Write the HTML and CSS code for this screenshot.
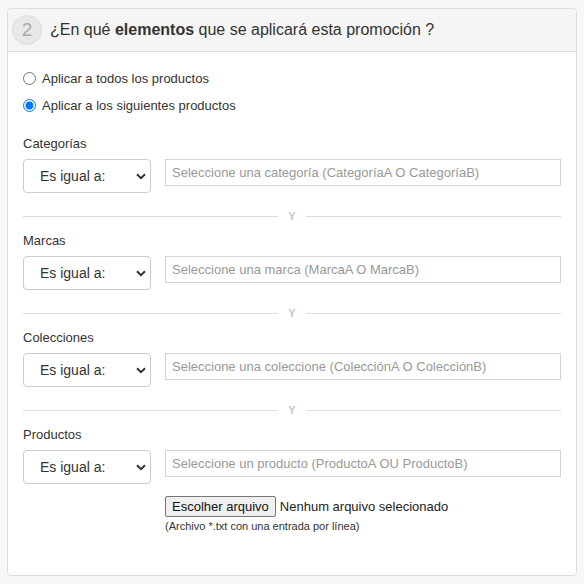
FILE: index.html
```html
<!DOCTYPE html>
<html lang="es">
<head>
<meta charset="utf-8">
<title>Promoción</title>
<link rel="stylesheet" href="styles.css">
</head>
<body>
<div class="card">
  <div class="card-header">
    <span class="step">2</span>
    <h2 class="title">¿En qué <b>elementos</b> que se aplicará esta promoción ?</h2>
  </div>
  <div class="card-body">
    <label class="radio-row"><input type="radio" name="scope" class="radio"><span>Aplicar a todos los productos</span></label>
    <label class="radio-row"><input type="radio" name="scope" class="radio" checked><span>Aplicar a los siguientes productos</span></label>

    <div class="field first">
      <div class="field-label">Categorías</div>
      <div class="row">
        <div class="select"><span>Es igual a:</span><svg class="chev" width="10" height="7" viewBox="0 0 10 7"><path d="M1 1.2 L5 5.2 L9 1.2" fill="none" stroke="#333" stroke-width="2"/></svg></div>
        <div class="col"><input class="text-input" type="text" placeholder="Seleccione una categoría (CategoríaA O CategoríaB)"></div>
      </div>
    </div>
    <div class="sep"><span class="line"></span><span class="y">Y</span><span class="line"></span></div>

    <div class="field">
      <div class="field-label">Marcas</div>
      <div class="row">
        <div class="select"><span>Es igual a:</span><svg class="chev" width="10" height="7" viewBox="0 0 10 7"><path d="M1 1.2 L5 5.2 L9 1.2" fill="none" stroke="#333" stroke-width="2"/></svg></div>
        <div class="col"><input class="text-input" type="text" placeholder="Seleccione una marca (MarcaA O MarcaB)"></div>
      </div>
    </div>
    <div class="sep"><span class="line"></span><span class="y">Y</span><span class="line"></span></div>

    <div class="field">
      <div class="field-label">Colecciones</div>
      <div class="row">
        <div class="select"><span>Es igual a:</span><svg class="chev" width="10" height="7" viewBox="0 0 10 7"><path d="M1 1.2 L5 5.2 L9 1.2" fill="none" stroke="#333" stroke-width="2"/></svg></div>
        <div class="col"><input class="text-input" type="text" placeholder="Seleccione una coleccione (ColecciónA O ColecciónB)"></div>
      </div>
    </div>
    <div class="sep"><span class="line"></span><span class="y">Y</span><span class="line"></span></div>

    <div class="field">
      <div class="field-label">Productos</div>
      <div class="row">
        <div class="select"><span>Es igual a:</span><svg class="chev" width="10" height="7" viewBox="0 0 10 7"><path d="M1 1.2 L5 5.2 L9 1.2" fill="none" stroke="#333" stroke-width="2"/></svg></div>
        <div class="col">
          <input class="text-input" type="text" placeholder="Seleccione un producto (ProductoA OU ProductoB)">
          <div class="file-row"><span class="file-btn">Escolher arquivo</span><span class="file-name">Nenhum arquivo selecionado</span></div>
          <div class="help">(Archivo *.txt con una entrada por línea)</div>
        </div>
      </div>
    </div>
  </div>
</div>
</body>
</html>
```
FILE: styles.css
```css
* { box-sizing: border-box; }
html, body { margin: 0; padding: 0; }
body {
  background: #f7f7f7;
  font-family: "Liberation Sans", Arial, sans-serif;
  color: #333;
  padding: 8px 7px 0 7px;
}
.card {
  width: 570px;
  height: 568px;
  background: #fff;
  border: 1px solid #ddd;
  border-radius: 4px;
  overflow: hidden;
}
.card-header {
  height: 43px;
  background: #f5f5f5;
  border-bottom: 1px solid #ddd;
  display: flex;
  align-items: center;
  padding-left: 4px;
  gap: 8px;
}
.step {
  width: 30px;
  height: 30px;
  border-radius: 50%;
  background: #e8e8e8;
  border: 1px solid #dcdcdc;
  color: #a8a8a8;
  font-size: 19px;
  display: flex;
  align-items: center;
  justify-content: center;
}
.title {
  margin: 0;
  font-size: 16px;
  font-weight: normal;
  color: #333;
}
.title b { font-weight: bold; }
.card-body {
  padding: 16px 15px 0 15px;
  font-size: 13px;
}
.radio-row {
  display: flex;
  align-items: center;
  height: 20px;
  gap: 6px;
  margin-bottom: 7px;
}
.radio {
  margin: 0;
  width: 13px;
  height: 13px;
}
.field.first { margin-top: 20px; }
.field-label {
  line-height: 18px;
  height: 18px;
  margin-bottom: 6px;
}
.row {
  display: flex;
  align-items: flex-start;
  gap: 14px;
}
.select {
  width: 128px;
  height: 34px;
  flex: none;
  border: 1px solid #ccc;
  border-radius: 4px;
  display: flex;
  align-items: center;
  justify-content: space-between;
  padding: 0 4px 0 16px;
  font-size: 14px;
  color: #333;
  background: #fff;
}
.chev { display: block; margin-top: 1px; }
.col { flex: 1; min-width: 0; }
.text-input {
  display: block;
  width: 100%;
  height: 27px;
  border: 1px solid #d4d4d4;
  border-radius: 0;
  padding: 0 6px;
  font-family: "Liberation Sans", Arial, sans-serif;
  font-size: 13px;
  color: #333;
  outline: none;
}
.text-input::placeholder { color: #999; }
.sep {
  display: flex;
  align-items: center;
  gap: 10px;
  height: 10px;
  margin: 18px 0 11px;
}
.sep .line {
  flex: 1;
  border-top: 1px solid #ddd;
}
.sep .y {
  font-size: 11px;
  font-weight: bold;
  color: #c4c6d2;
  line-height: 10px;
}
.file-row {
  margin-top: 19px;
  display: flex;
  align-items: center;
  gap: 4px;
  font-size: 13px;
}
.file-btn {
  height: 21px;
  line-height: 19px;
  padding: 0 6px;
  border: 1px solid #767676;
  border-radius: 2px;
  background: #efefef;
  color: #111;
}
.file-name { color: #222; }
.help {
  margin-top: 2px;
  font-size: 11px;
  line-height: 14px;
  color: #333;
}
```
